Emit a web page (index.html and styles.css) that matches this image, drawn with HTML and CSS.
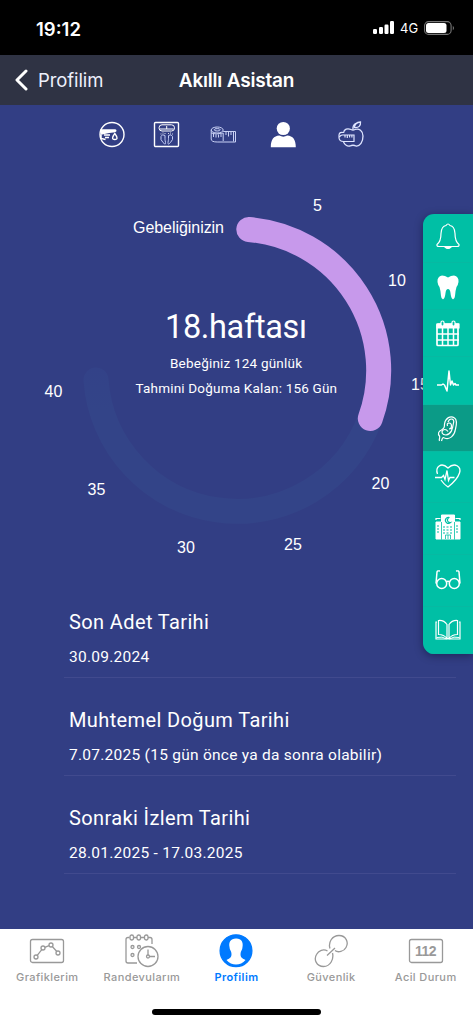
FILE: index.html
```html
<!DOCTYPE html>
<html lang="tr">
<head>
<meta charset="utf-8">
<title>Akıllı Asistan</title>
<link rel="stylesheet" href="styles.css">
</head>
<body>
<div class="app">
  <div class="status">
    <span class="time">19:12</span>
    <div class="signals">
      <svg width="22" height="14" viewBox="0 0 22 14" fill="#fff"><rect x="0" y="8" width="4" height="5" rx="1.2"/><rect x="6" y="6" width="4" height="7" rx="1.2"/><rect x="11.500" y="3.500" width="4" height="9.500" rx="1.200"/><rect x="17" y="0" width="4" height="13" rx="1.200"/></svg>
      <span class="network">4G</span>
      <svg width="31" height="14" viewBox="0 0 31 14"><rect x=".6" y=".6" width="26.500" height="12.800" rx="4" fill="none" stroke="#777" stroke-width="1.100"/><rect x="2" y="2" width="20.500" height="10" rx="2.500" fill="#fff"/><path d="M28.800 4.700q2.400 2.300 0 4.600z" fill="#777"/></svg>
    </div>
  </div>
  <header class="header">
    <div class="back">
      <svg width="14" height="22" viewBox="0 0 14 22" fill="none" stroke="#fff" stroke-width="3" stroke-linecap="round" stroke-linejoin="round"><path d="M12 2 3 11l9 9"/></svg>
      <span>Profilim</span>
    </div>
    <h1 class="title">Akıllı Asistan</h1>
  </header>

  <main class="content">
    <nav class="tools">
      <svg class="tool" width="28" height="28" viewBox="0 0 28 28" fill="none" stroke="#fff"><circle cx="14" cy="14.500" r="12" stroke-width="1.400"/><path d="M2.500 10H17q1.500.5 0 1.500l-6 .8L3 14" stroke-width="1.500" fill="#fff"/><path d="M3 14.500v4l4.500 1M12 15H6M11 17.500H7" stroke-width="1.500"/><path d="M16.800 13.500q-4.500 6 0 6t0-6z" stroke-width="1.300"/></svg>
      <svg class="tool" width="28" height="28" viewBox="0 0 28 28" fill="none" stroke="#fff"><rect x="1.500" y="2.500" width="24" height="24" rx="1" stroke-width="1.400"/><rect x="6" y="4.800" width="15.500" height="6.200" rx="3"/><path d="M7 9h13.500M13.700 6v3"/><path d="M12 15.500q-3-2-4 1t2 6 2.500 0-.5-3 0-4zM15.500 15.500q3-2 4 1t-2 6-2.500 0 .5-3 0-4z" stroke="#c5cdf5"/><path d="M8 14.500v-1M10 13.500v-1M12 14v-1M15.500 14v-1M17.500 13.500v-1M19.500 14.500v-1" stroke-width=".8"/></svg>
      <svg class="tool" width="28" height="28" viewBox="0 0 28 28" fill="none" stroke="#c9d1f5" stroke-width="1"><ellipse cx="7.200" cy="10" rx="6" ry="3"/><ellipse cx="7.200" cy="9.800" rx="3" ry="1.200"/><path d="M1.200 10v9q0 3 6 3h18.300V11.500H13.200M1.200 13q4 2 12 0V21M3.500 14v3M6 14.500v3M8.500 14.500v3M11 14v3M16 11.500v3.500M18.500 11.500v5M21 11.500v3.500M23.500 11.500v10"/></svg>
      <svg class="tool" width="28" height="28" viewBox="0 0 28 28" fill="#fff"><circle cx="13.300" cy="8.500" r="6.600"/><path d="M.8 27.300c0-8 3-11.300 8.500-11.800q4 2.300 8 0c5.500.5 8.500 3.800 8.500 11.800z"/></svg>
      <svg class="tool tool-apple" width="28" height="28" viewBox="0 0 28 28" fill="none" stroke="#dfe5ff" stroke-width="1.300"><path d="M6.500 13c.5-4 4-5 7.500-3.500 2 1 2 1 4 0 4-1.500 8 1.500 8 6.500 0 6-3 10.500-7 10-2-1-4-1-6 0-2.500.5-5-1-6.500-4M16 9.500q-.5-4 2.500-6M17.500 7.500q0-5 6-5.500.5 6-6 5.500z"/><path d="M6.500 12.500q-4-1-4.500 2.500v3q.5 3.500 4.500 3.500H17V15H5.500q-2 0-3 2M8 15v2.500M10.300 15v3M12.600 15v2.500M14.900 15v2.500" stroke-width="1.200"/></svg>
    </nav>

    <svg class="dial" width="473" height="400" viewBox="0 170 473 400">
      <defs><linearGradient id="fade" x1="0" y1="368" x2="0" y2="410" gradientUnits="userSpaceOnUse"><stop offset="0" stop-color="#334288"/><stop offset="1" stop-color="#334488"/></linearGradient></defs>
      <path class="track" stroke="url(#fade)" d="M370 418.500A141.500 141.500 0 0 1 96 380"/>
      <path class="progress" d="M248.800 229.500A141.500 141.500 0 0 1 370.300 418.500"/>
      <g class="marks">
        <text x="133" y="233" textLength="91" lengthAdjust="spacing">Gebeliğinizin</text>
        <text x="313" y="211">5</text>
        <text x="388" y="286">10</text>
        <text x="411" y="390">15</text>
        <text x="371.500" y="489">20</text>
        <text x="284" y="550">25</text>
        <text x="177" y="553">30</text>
        <text x="87.500" y="495">35</text>
        <text x="44.500" y="397">40</text>
      </g>
      <g class="summary">
        <text class="week" x="165" y="338" textLength="142">18.haftası</text>
        <text x="170" y="368" textLength="132">Bebeğiniz 124 günlük</text>
        <text x="135.500" y="393" textLength="201.500">Tahmini Doğuma Kalan: 156 Gün</text>
      </g>
    </svg>

    <section class="dates">
      <div class="date"><h2>Son Adet Tarihi</h2><p>30.09.2024</p></div>
      <div class="date"><h2>Muhtemel Doğum Tarihi</h2><p>7.07.2025 (15 gün önce ya da sonra olabilir)</p></div>
      <div class="date"><h2>Sonraki İzlem Tarihi</h2><p>28.01.2025 - 17.03.2025</p></div>
    </section>

    <aside class="side">
      <div class="side-item"><svg width="28" height="28" viewBox="0 0 28 28"><path d="M3 22.500q4-3 4-11Q7.500 4 12 3.500q2-3 4 0 4.500.5 5 8 0 8 4 11 .5 2-2 2H5q-2.500 0-2-2z"/><path d="M11 25q3 3 6 0z" fill="#fff"/></svg></div>
      <div class="side-item"><svg width="28" height="28" viewBox="0 0 28 28"><path d="M14 5.500q-3-2-6-2-5 1-4.500 6.500.4 3 2 5 1 3 1.500 9 .5 4 2.500 3 1.500-1 2-6 .5-4 2.500-4t2.500 4q.5 5 2 6 2 1 2.500-3 .5-6 1.500-9 1.600-2 2-5 .5-5.500-4.500-6.500-3 0-6 2z" fill="#fff" stroke="none"/></svg></div>
      <div class="side-item"><svg width="28" height="28" viewBox="0 0 28 28"><path d="M4 5h20v20.500q0 1-1 1H4q-1 0-1-1V6q0-1 1-1z" stroke-width="1.700"/><path d="M3 5h22v4H3z" fill="#fff"/><path d="M3 15h22M3 21h22M8.500 9v17M14 9v17M19.500 9v17" stroke-width="1.500"/><rect x="7" y="2" width="3" height="5" rx="1.500" fill="#00bfa5"/><rect x="18" y="2" width="3" height="5" rx="1.500" fill="#00bfa5"/></svg></div>
      <div class="side-item"><svg width="28" height="28" viewBox="0 0 28 28"><path d="M3 18h4.500l1.500-1 1.500 1 2.500 6 2-20 1.500 14 1.500-4 1.500 4 1.500-1.500 1 1.500h3" stroke-width="1.500" stroke-linejoin="round"/></svg></div>
      <div class="side-item active"><svg width="28" height="28" viewBox="0 0 28 28"><path d="M5.500 27c-1-2 1-3 0-5-2-2-1-5 2-6 3-2 3-3 3-6 1-6 6-9 10-6 3 2 2 7 1 11-1 7-6 11-11 9-2-1-2 0-3 3"/><path d="M14 8c2-5 7-3 5.500 1-1 6-2 11-7.500 12-4 0-5-3-3-5 2-1 4 0 5 1.500M13.500 12q-1-3 1.500-3t2.500 3-2.500 3q3 0 4-1.500"/></svg></div>
      <div class="side-item"><svg width="28" height="28" viewBox="0 0 28 28"><path d="M3.500 12C1 5 7-.5 14 6c7-6.500 13.500-1 11.500 5-2 6-7 10.500-11.500 14-3-2-5-4-7-7M1 15.500h6.500l2-2 1.500 4 2-9 1.500 10 1.500-3h4.500" stroke-width="1.300"/></svg></div>
      <div class="side-item"><svg width="28" height="28" viewBox="0 0 28 28"><path d="M7.500 2h13v24h-13zM2 9h5v17H2zM21 9h5v17h-5z" fill="#fff" stroke-width="1"/><path d="M2 7V5.500h4.500M26 7V5.500h-4.500"/><g stroke="#00bfa5"><path d="M15.500 4.500a3 3 0 1 0 1 5 2.500 2.500 0 1 1-1-5"/><path d="M9 14h10M9 17h10M9 20h10M3 13h3M3 16h3M3 19h3M22 13h3M22 16h3M22 19h3" stroke-dasharray="2 1.500"/><path d="M11.500 26v-4h5v4M14 22v4M7.500 9v17M20.500 9v17" stroke-width=".8"/></g></svg></div>
      <div class="side-item"><svg width="28" height="28" viewBox="0 0 28 28"><circle cx="7.700" cy="16.500" r="5" stroke-width="1.500"/><circle cx="20.300" cy="16.500" r="5" stroke-width="1.500"/><path d="M12.200 15q1.800-1.500 3.600 0M2 16.500 3 5q0-1.500 3-1M26 16.500 25 5q0-1.500-3-1" stroke-width="1.500"/></svg></div>
      <div class="side-item"><svg width="28" height="28" viewBox="0 0 28 28"><path d="M13 22.500V8.500Q10 4 4.500 4.500v14q5.500 0 8.500 4zM15 22.500V8.500Q18 4 23.500 4.500v14q-5.500 0-8.500 4zM3 6H2v17h10q2-1 4 0h10V6h-1"/><path d="M2.500 21.500q6-1.500 10 1.500M25.500 21.500q-6-1.500-10 1.500" stroke-width="1"/></svg></div>
    </aside>
  </main>

  <footer class="tabs">
    <nav class="tabrow">
      <div class="tab"><svg width="36" height="36" viewBox="0 0 36 36"><rect x="1.500" y="6.500" width="33" height="23" rx="2"/><circle cx="7" cy="24" r="2"/><circle cx="14" cy="15" r="2"/><circle cx="22" cy="12" r="2"/><circle cx="29" cy="20" r="2"/><path d="m8.200 22.300 4.600-5.700m3-2.300 4.200-1.600m3.300.8 4.500 5"/></svg><span>Grafiklerim</span></div>
      <div class="tab"><svg width="36" height="36" viewBox="0 0 36 36"><path d="M5.500 4.500H4q-2 0-2 2V28q0 2 2 2h9M26 4.500q2 0 2 2V11M9.500 4.500H13M16.500 4.500H20"/><rect x="6" y="2" width="3.500" height="5" rx="1.700"/><rect x="13" y="2" width="3.500" height="5" rx="1.700"/><rect x="20.500" y="2" width="3.500" height="5" rx="1.700"/><path d="M24 4.500h2"/><circle cx="8.500" cy="14" r="1.500"/><circle cx="15" cy="14" r="1.500"/><circle cx="8.500" cy="22" r="1.500"/><circle cx="24" cy="23.500" r="10"/><circle cx="24" cy="23.500" r="1.500"/><path d="M24 16.500V22M25.500 23.500H31"/></svg><span>Randevularım</span></div>
      <div class="tab selected"><svg width="36" height="36" viewBox="0 0 36 36"><circle cx="18" cy="17.700" r="15.900" fill="#007aff" stroke="#007aff"/><path d="M18 5.500c5.500-.2 7.500 4 6.500 8.500 0 3-2 4-2 7 0 3 1 4 5 6-5 6-14 6-19 0 4-2 5-3 5-6 0-3-2-4-2-7-1-4.500 1-8.500 6.500-8.500z" fill="#fff" stroke="none"/></svg><span>Profilim</span></div>
      <div class="tab"><svg width="36" height="36" viewBox="0 0 36 36" stroke-width="1.700"><path d="M17 15.500c-2-6 2-13 9-13 7 0 10 7 7 12-2 4-8 5.500-11 3M19.500 20c1.500 6-2 13.500-9 13.500-7 0-10-7-7-12 2-4 7-6 11-3.500M14 22.500l8-7.500"/></svg><span>Güvenlik</span></div>
      <div class="tab"><svg width="36" height="36" viewBox="0 0 36 36"><rect x="1.500" y="6.500" width="33" height="23" rx="2"/><text class="emergency" x="7" y="22.500" textLength="22">112</text></svg><span>Acil Durum</span></div>
    </nav>
    <div class="home"></div>
  </footer>
</div>
</body>
</html>
```

FILE: styles.css
```css
* { box-sizing: border-box; }
body { margin: 0; background: #000; }
h1, h2, p { margin: 0; font-weight: 400; }
svg { display: block; flex: none; }
.app { width: 473px; height: 1024px; overflow: hidden; display: flex; flex-direction: column; color: #fff; font-family: Roboto, sans-serif; }
.status { height: 55px; flex: none; background: #000; display: flex; justify-content: space-between; align-items: flex-start; padding: 18px 18px 0 36px; font-family: Inter, sans-serif; }
.time { font-size: 18.500px; line-height: 22px; font-weight: 600; }
.signals { display: flex; align-items: center; gap: 5px; padding-top: 3px; }
.network { font-size: 13px; line-height: 14px; width: 19px; }
.header { height: 50px; flex: none; background: #2f3344; display: grid; grid-template-columns: 1fr auto 1fr; align-items: center; padding: 0 14px; font-family: Inter, sans-serif; }
.back { display: flex; align-items: center; gap: 10px; font-size: 18.500px; letter-spacing: -.1px; color: #edf0fc; }
.title { font-size: 19px; font-weight: 600; letter-spacing: -.2px; white-space: nowrap; }
.content { height: 824px; flex: none; background: #323e84; position: relative; display: flex; flex-direction: column; }
.tools { height: 65px; flex: none; padding: 15px 0 0 98px; display: flex; gap: 27px; }
.tool:nth-child(3) { margin-left: 2px; }
.tool:nth-child(4) { margin-left: 5px; }
.tool-apple { margin-left: 12px; }
.dial { flex: none; }
.track, .progress { fill: none; stroke-width: 25; stroke-linecap: round; }
.progress { stroke: #c799eb; }
.marks { fill: #fff; font: 16px "Liberation Sans", Arial, sans-serif; }
.summary { fill: #fff; font: 13.500px Roboto, sans-serif; }
.summary .week { font-size: 32.500px; }
.dates { padding: 10px 17px 0 64px; }
.date { height: 98px; padding: 30px 0 0 5px; border-bottom: 1px solid #414a8e; }
.date h2 { font-size: 20px; line-height: 24px; letter-spacing: .38px; white-space: nowrap; }
.date p { font-size: 15.500px; line-height: 20px; margin-top: 13px; letter-spacing: .26px; white-space: nowrap; }
.side { position: absolute; right: 0; top: 109px; width: 50px; height: 440px; border-radius: 11px 0 0 11px; background: #00bfa5; box-shadow: 0 2px 8px rgba(0,0,30,.4); overflow: hidden; display: grid; grid-template-rows: 49px 47px 47px 48px 47px 51px 52px 52px 47px; }
.side-item { display: flex; align-items: center; justify-content: center; border-bottom: 1px solid #07b9a2; }
.side-item svg { fill: none; stroke: #fff; stroke-width: 1.200; }
.side-item:first-child svg { margin-top: -4px; }
.side-item:nth-child(6) svg { margin-top: -3px; }
.side-item:nth-child(7) svg { margin-top: -3px; }
.side-item.active { background: #0b9b87; }
.tabs { height: 95px; flex: none; background: #fff; display: flex; flex-direction: column; align-items: center; justify-content: space-between; padding-bottom: 9px; }
.tabrow { width: 473px; display: grid; grid-template-columns: repeat(5, 1fr); padding-top: 4px; }
.tab { display: flex; flex-direction: column; align-items: center; gap: 1px; color: #999; font: 500 11px/14px Inter, sans-serif; letter-spacing: .4px; white-space: nowrap; }
.tab svg { fill: none; stroke: #999; stroke-width: 1.300; }
.tab svg .emergency { fill: #999; stroke: none; font: 700 14px "Liberation Sans", sans-serif; }
.selected { color: #007aff; font-weight: 600; }
.home { width: 169px; height: 6px; border-radius: 3px; background: #000; }
```
